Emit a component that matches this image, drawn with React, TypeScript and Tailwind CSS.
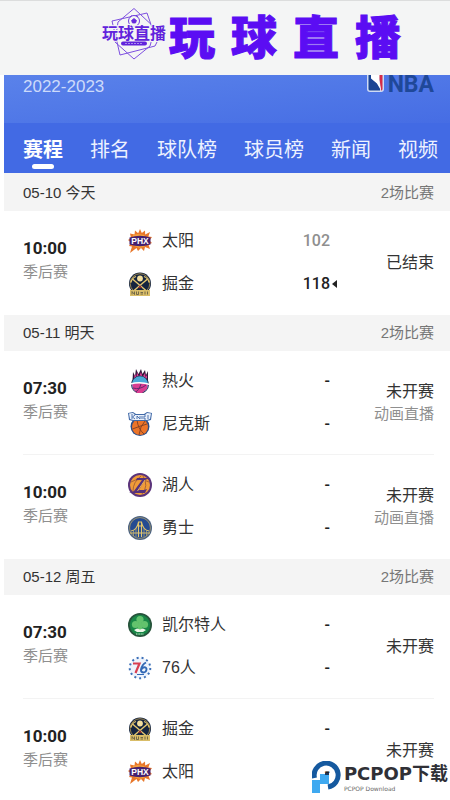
import type { ReactNode } from 'react';

type Team = { name: string; logo: ReactNode; score?: number; winner?: boolean };
type Match = { time: string; status: string; live?: string; teams: Team[] };
type Day = { date: string; total: number; matches: Match[] };

function SunsLogo() {
  return (
    <svg viewBox="0 0 24 24" className="size-6 shrink-0" aria-hidden="true">
      <path
        d="M12 0l1.8 4L17 1.500l.2 4L22 3l-1.600 4.500L24 8l-2.500 3.500L24 14l-3.500 1.500L22 20l-5-2-1 4-3-3-3 3-1.500-3L2 24l2-6.500L1 17l2-3.500L0 11l3-2-1-4.500 4.500 1L7 1.500l3.200 2.800z"
        fill="#e8772a"
      />
      <path d="M5 6l5-1 6 1 3 4-1 7-6 2-6-2-2-5z" fill="#f6a13c" />
      <path d="M1.500 8.500Q12 5 22.500 8.500v7Q12 19 1.500 15.500z" fill="#46206f" />
      <text x="12" y="15" textAnchor="middle" fontSize="8.500" fontWeight="700" fill="#fff" className="font-['Liberation_Sans',sans-serif]">
        PHX
      </text>
    </svg>
  );
}

function NuggetsLogo() {
  return (
    <svg viewBox="0 0 24 24" className="size-6 shrink-0" aria-hidden="true">
      <circle cx="12" cy="11.500" r="11" fill="#14243f" />
      <circle cx="12" cy="11.500" r="9.800" fill="none" stroke="#b99a52" strokeWidth=".8" />
      <circle cx="12" cy="6.500" r="2.900" fill="#f3df9e" />
      <path d="M4.500 7l14 12M19.500 7l-14 12" stroke="#e5c870" strokeWidth="1.400" />
      <path d="M2.800 10.500Q4 6 8 4.500M21.200 10.500Q20 6 16 4.500" fill="none" stroke="#e5c870" strokeWidth="1.300" />
      <path d="M10 16l2-3 2 3z" fill="#8a2b35" />
      <path d="M2 18h20v6H2z" fill="#d9bd68" />
      <path d="M4 22.500v-3l2.500 3v-3M8.500 19.500v3h2v-3M12.500 20.500h2.500M12.500 22h2.500M17 19.500v3M19.500 19.500v3" fill="none" stroke="#5a5440" strokeWidth=".8" />
    </svg>
  );
}

function HeatLogo() {
  return (
    <svg viewBox="0 0 24 24" className="size-6 shrink-0" aria-hidden="true">
      <path d="M4.500 12L5 3l2 4 1-7 2.500 5L13 0l1.500 5L17 1l1 5 2-4v10z" fill="#33163a" />
      <path d="M6 9l1-4 1.500 3L9 3l2 5 2-5 1.500 5L17 4l.5 4 1.500-2v5H6z" fill="#df3f96" />
      <circle cx="12" cy="15.500" r="9" fill="#1d2b4c" />
      <circle cx="12" cy="15.500" r="8.200" fill="#4aaad8" />
      <path d="M4 14h16l-1 6-5 4H9l-4-4z" fill="#d93d91" />
      <path d="M2.500 15Q12 12.500 22 15.500" fill="none" stroke="#fff" strokeWidth="1.500" />
      <path d="M5 19q7 2 13-3M8 23q4-3 5-8" fill="none" stroke="#57286b" strokeWidth=".9" />
    </svg>
  );
}

function KnicksLogo() {
  return (
    <svg viewBox="0 0 24 24" className="size-6 shrink-0" aria-hidden="true">
      <circle cx="12" cy="14.500" r="9.500" fill="#2b4d87" />
      <circle cx="12" cy="15" r="8" fill="#ec7428" />
      <path d="M4.500 17Q12 14 19 12M9 8q1 9 7 14M17 9q-5 5-6 14" fill="none" stroke="#7e3d24" strokeWidth=".9" />
      <path d="M0 1l5-1 3 2h8l3-2 5 1-1 7-4 1H5L1 8z" fill="#3f68a7" />
      <path d="M1 1.500l4-.5 2 2h10l2-2 4 .5-1 5.500-3 1H5L2 7z" fill="#e8effa" />
      <path d="M4 2v5M7 3L4.500 5 7 7M9 7V4l3 3V4M14 4v3M18 4h-2v3h2M20 3v4" fill="none" stroke="#3f68a7" strokeWidth=".9" />
    </svg>
  );
}

function LakersLogo() {
  return (
    <svg viewBox="0 0 24 24" className="size-6 shrink-0" aria-hidden="true">
      <circle cx="12" cy="12" r="12" fill="#5b347b" />
      <circle cx="12" cy="12" r="10" fill="#f09c38" />
      <path d="M3 9q8-5 18 0M5 18q0-9 8-15M14 21q7-8 1-18" fill="none" stroke="#975639" strokeWidth=".8" />
      <path d="M9 5h13l-5 2-6 10h5l3-1-2 4H1l5-2L14 7H8z" fill="#56317b" />
      <path d="M17 7L9.500 18" fill="none" stroke="#f3bd5b" strokeWidth=".9" />
    </svg>
  );
}

function WarriorsLogo() {
  return (
    <svg viewBox="0 0 24 24" className="size-6 shrink-0" aria-hidden="true">
      <circle cx="12" cy="12" r="12" fill="#4a6180" />
      <circle cx="12" cy="12" r="10.400" fill="#244b91" stroke="#d0b367" strokeWidth=".6" />
      <path d="M2 17h20M10.500 21V6h3v15M10.500 10h3M3 15q6-1 7.500-9M21 15q-6-1-7.500-9" fill="none" stroke="#e2c66d" strokeWidth="1.100" />
      <path d="M5.500 14v6M8 12v9M16 12v9M18.500 14v6" stroke="#c2b06d" strokeWidth=".7" />
    </svg>
  );
}

function CelticsLogo() {
  return (
    <svg viewBox="0 0 24 24" className="size-6 shrink-0" aria-hidden="true">
      <circle cx="12" cy="12" r="12" fill="#27533b" />
      <circle cx="12" cy="12" r="10.300" fill="#198747" />
      <g fill="#63c36d">
        <circle cx="12" cy="6.500" r="3.600" />
        <circle cx="7.500" cy="11.500" r="3.600" />
        <circle cx="16.500" cy="11.500" r="3.600" />
        <path d="M10.500 9h3l1 8h-5z" />
      </g>
      <path d="M6 17l3-1.500 3 1 3-1 3 1.500-3 2H9z" fill="#eef7e9" />
      <path d="M8 21h8" stroke="#d9ead8" strokeWidth="1" strokeDasharray="1 .6" />
    </svg>
  );
}

function SixersLogo() {
  return (
    <svg viewBox="0 0 24 24" className="size-6 shrink-0" aria-hidden="true">
      <circle cx="12" cy="12" r="10.500" fill="#edf3fc" />
      <circle cx="12" cy="12" r="10.300" fill="none" stroke="#3d70b8" strokeWidth="2" strokeDasharray="2 2.980" />
      <path d="M5 7.500h6.500L7.500 17" fill="none" stroke="#d83e50" strokeWidth="2.200" />
      <path d="M18 6.500q-4 2-5 7c-.5 4 5 4 5.500 0 .3-3-4-3-5 0" fill="none" stroke="#3268b5" strokeWidth="1.900" />
      <path d="M9 18.500h7" stroke="#3268b5" strokeWidth="1" />
    </svg>
  );
}

const days: Day[] = [
  {
    date: '05-10 今天',
    total: 2,
    matches: [
      {
        time: '10:00',
        status: '已结束',
        teams: [
          { name: '太阳', logo: <SunsLogo />, score: 102 },
          { name: '掘金', logo: <NuggetsLogo />, score: 118, winner: true },
        ],
      },
    ],
  },
  {
    date: '05-11 明天',
    total: 2,
    matches: [
      {
        time: '07:30',
        status: '未开赛',
        live: '动画直播',
        teams: [
          { name: '热火', logo: <HeatLogo /> },
          { name: '尼克斯', logo: <KnicksLogo /> },
        ],
      },
      {
        time: '10:00',
        status: '未开赛',
        live: '动画直播',
        teams: [
          { name: '湖人', logo: <LakersLogo /> },
          { name: '勇士', logo: <WarriorsLogo /> },
        ],
      },
    ],
  },
  {
    date: '05-12 周五',
    total: 2,
    matches: [
      {
        time: '07:30',
        status: '未开赛',
        teams: [
          { name: '凯尔特人', logo: <CelticsLogo /> },
          { name: '76人', logo: <SixersLogo /> },
        ],
      },
      {
        time: '10:00',
        status: '未开赛',
        teams: [
          { name: '掘金', logo: <NuggetsLogo /> },
          { name: '太阳', logo: <SunsLogo /> },
        ],
      },
    ],
  },
];

const tabs = ['赛程', '排名', '球队榜', '球员榜', '新闻', '视频'];

function SiteEmblem() {
  return (
    <svg viewBox="0 0 66 54" className="h-[54px] w-[66px]" role="img" aria-label="玩球直播">
      <g fill="none" stroke="#7d4fe0" strokeWidth="1">
        <path d="M33 1.500L54 21 49 39 33 52 14 35 17 15z" />
        <path d="M11 14L46 6 56 35 54 39 19 48 16 35z" />
      </g>
      <circle cx="33" cy="14" r="5.500" fill="#f4f5f5" stroke="#7040dd" />
      <path d="M33 11.500l2.500 2-1 2.500h-3l-1-2.500zM29 10l2-1.500M37 10l-2-1.500" fill="#6629dd" stroke="#6629dd" strokeWidth=".8" />
      <text
        x="33"
        y="32"
        textAnchor="middle"
        fontSize="16"
        fontWeight="700"
        fill="#6123dc"
        stroke="#f4f5f5"
        strokeWidth="2"
        paintOrder="stroke"
        className="font-['Noto_Sans_CJK_SC',sans-serif]"
      >
        玩球直播
      </text>
      <rect x="20" y="34.500" width="26" height="4" rx="2" fill="#6123dc" />
      <path d="M24 36.500h18" stroke="#a88ceb" strokeWidth="1" strokeDasharray="2 1" />
    </svg>
  );
}

function NbaMark() {
  return (
    <svg viewBox="0 0 17 17" className="size-[17px]" aria-hidden="true">
      <path d="M0 0h17v14q0 3-3 3H3q-3 0-3-3z" fill="#cfdbf4" />
      <path d="M1.500 0H5l4 7 4 5v3.500H3q-1.500 0-1.500-1.500z" fill="#1b4594" />
      <path d="M12 0h3.500v14q0 1.500-1.500 1.500z" fill="#d62b47" />
      <path d="M4 0h8.500l-.5 5 2 10.500-4-7-6-5z" fill="#fff" />
    </svg>
  );
}

function MatchRow({ match }: { match: Match }) {
  return (
    <li className="mr-4 ml-[19px] flex h-[104px] items-center border-b border-[#f3f3f3] last:border-transparent">
      <div className="w-[105px] pb-1.5">
        <div className="font-['Roboto',sans-serif] text-[17px] leading-6 font-bold text-[#222]">{match.time}</div>
        <div className="text-[15px] leading-6 text-[#8f8f8f]">季后赛</div>
      </div>
      <div className="flex flex-1 flex-col gap-[19px]">
        {match.teams.map((team) => (
          <div key={team.name} className="flex h-6 items-center">
            {team.logo}
            <span className="ml-2.5 flex-1 text-base text-[#333]">{team.name}</span>
            <span
              className={
                team.score && !team.winner
                  ? "font-['Roboto',sans-serif] text-base font-medium text-[#8f8f8f]"
                  : "font-['Roboto',sans-serif] text-base font-medium text-[#222]"
              }
            >
              {team.score ?? '-'}
            </span>
            <span className="flex w-3 pl-0.5">
              {team.winner && (
                <svg viewBox="0 0 5 8" className="h-2 w-[5px]" aria-hidden="true">
                  <path d="M5 0v8L0 4z" fill="#222" />
                </svg>
              )}
            </span>
          </div>
        ))}
      </div>
      <div className="w-[92px] text-right">
        <div className="text-base leading-[22px] text-[#333]">{match.status}</div>
        {match.live && <div className="text-[15px] leading-[22px] text-[#8f8f8f]">{match.live}</div>}
      </div>
    </li>
  );
}

export default function App() {
  return (
    <div className="relative h-screen overflow-hidden bg-white font-['Liberation_Sans','Noto_Sans_CJK_SC',sans-serif]">
      {/* Site banner */}
      <header className="flex h-[75px] items-start justify-center gap-0.5 border-t border-[#dcdddd] bg-[#f4f5f5] pt-1.5 pl-[52px]">
        <SiteEmblem />
        <h1 className="flex gap-4 font-['Noto_Sans_CJK_SC',sans-serif] text-[46px] leading-[54px] font-black text-[#5b0df3] [-webkit-text-stroke:1px_#5b0df3]">
          <span>玩</span>
          <span>球</span>
          <span>直</span>
          <span>播</span>
        </h1>
      </header>

      <main className="ml-1">
        {/* Season */}
        <div className="flex h-12 items-start justify-between bg-linear-to-br from-[#5a82ea] to-[#466de4] pr-4 pl-[19px]">
          <span className="text-[17px] leading-6 text-[#ccdafa]">2022-2023</span>
          <div className="flex items-start gap-1">
            <NbaMark />
            <span className="font-['Roboto',sans-serif] text-[23px] leading-5 font-bold text-[#1f4899]">NBA</span>
          </div>
        </div>

        {/* Tabs */}
        <nav className="flex h-[50px] items-start justify-between bg-[#426ae4] pt-3.5 pr-3 pl-[19px]">
          {tabs.map((tab, i) => (
            <button
              key={tab}
              type="button"
              className={
                i === 0
                  ? 'flex flex-col items-center text-xl leading-[27px] font-bold text-white'
                  : 'text-xl leading-[27px] text-[#edf2ff]'
              }
            >
              {tab}
              {i === 0 && <span className="h-[5px] w-[22px] rounded-full bg-white" />}
            </button>
          ))}
        </nav>

        {/* Schedule */}
        <div className="bg-[#f4f4f4] pt-0.5">
          {days.map((day) => (
            <section key={day.date}>
              <div className="flex h-9 items-center justify-between pr-4 pl-[19px] text-[15px]">
                <h2 className="text-[#333]">{day.date}</h2>
                <span className="text-[#777]">{day.total}场比赛</span>
              </div>
              <ul className="bg-white">
                {day.matches.map((match) => (
                  <MatchRow key={match.time} match={match} />
                ))}
              </ul>
            </section>
          ))}
        </div>
      </main>

      {/* Download badge */}
      <div className="absolute right-0.5 bottom-1.5 flex items-center gap-0.5">
        <svg viewBox="0 0 30 33" className="h-[33px] w-[30px]" aria-hidden="true">
          <path d="M2.500 17A12 12 0 1 1 16 26" fill="none" stroke="#15599f" strokeWidth="5" />
          <path d="M0 19h8v-6h9v10H8v9H0z" fill="#3fa9f0" />
          <path d="M13 12h4v2h-4z" fill="#1c3557" />
        </svg>
        <div className="text-[#303036]">
          <div className="flex items-center text-lg leading-[22px] font-bold">
            <span className="font-['DejaVu_Sans',sans-serif]">PCPOP</span>
            <span>下载</span>
          </div>
          <div className="font-['DejaVu_Sans',sans-serif] text-[6px] leading-2 text-[#666]">PCPOP Download</div>
        </div>
      </div>
    </div>
  );
}
